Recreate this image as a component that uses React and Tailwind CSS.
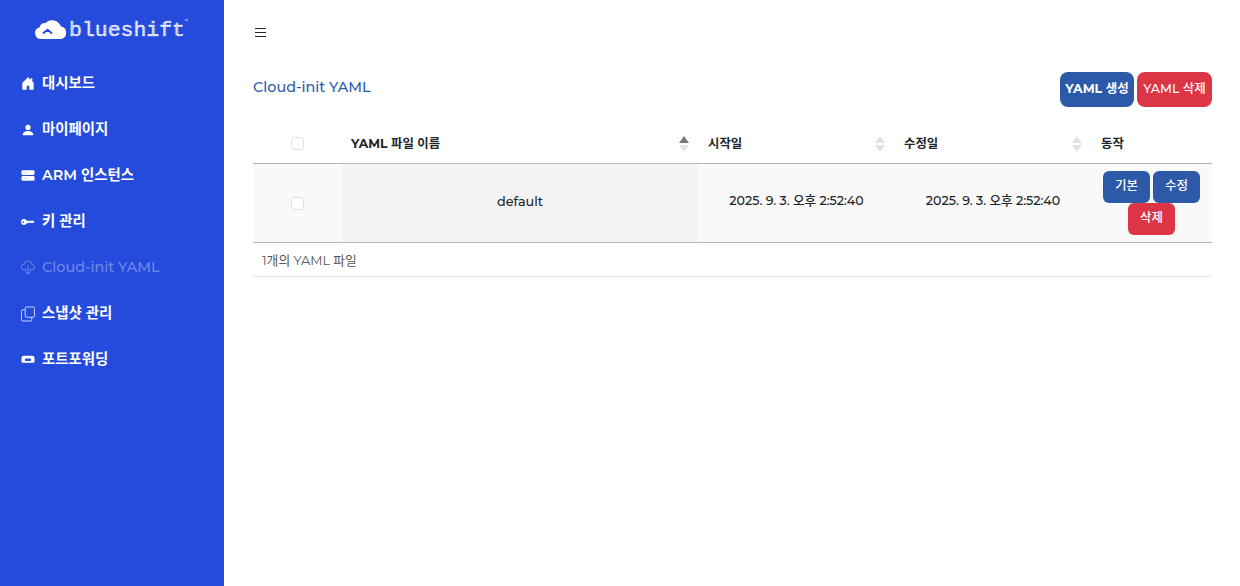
import {
  BsHouseDoorFill,
  BsPersonFill,
  BsKeyFill,
  BsCloudDownload,
} from "react-icons/bs";

const FONT = "font-['Montserrat','Inter','Noto_Sans_CJK_KR',sans-serif]";

function PortIcon() {
  return (
    <svg width="15" height="15" viewBox="0 0 15 15" fill="none">
      <path
        fillRule="evenodd"
        d="M3 3.5h9a2.5 2.5 0 0 1 2.5 2.5v4.2a.8.8 0 0 1-.8.8H1.3a.8.8 0 0 1-.8-.8V6A2.5 2.5 0 0 1 3 3.5zM5 6.5a.8.8 0 0 0-.8.8v.9a.8.8 0 0 0 .8.8h5a.8.8 0 0 0 .8-.8v-.9a.8.8 0 0 0-.8-.8z"
        fill="#fff"
      />
    </svg>
  );
}

function ServerIcon() {
  return (
    <svg width="15" height="15" viewBox="0 0 15 15">
      <rect x="0.5" y="2" width="14" height="5" rx="1.4" fill="#fff" />
      <rect x="0.5" y="8" width="14" height="5" rx="1.4" fill="#fff" />
      <path d="M3 4.5h1M5 4.5h1M3 10.5h1M5 10.5h1" stroke="#9db0ee" strokeWidth="1" />
    </svg>
  );
}

function CopyIcon() {
  return (
    <svg width="15" height="16" viewBox="0 0 15 16" fill="none" stroke="#d5ddfa" strokeWidth="1">
      <rect x="4.5" y="0.5" width="10" height="11" rx="1.5" />
      <path d="M4.5 3.5H2A1.5 1.5 0 0 0 .5 5v9A1.5 1.5 0 0 0 2 15.5h8a1.5 1.5 0 0 0 1.5-1.5v-2.5" />
    </svg>
  );
}

const menu = [
  { label: "대시보드", icon: <BsHouseDoorFill size={15} /> },
  { label: "마이페이지", icon: <BsPersonFill size={16} /> },
  { label: "ARM 인스턴스", icon: <ServerIcon /> },
  { label: "키 관리", icon: <BsKeyFill size={16} /> },
  { label: "Cloud-init YAML", icon: <BsCloudDownload size={15} />, active: true },
  { label: "스냅샷 관리", icon: <CopyIcon /> },
  { label: "포트포워딩", icon: <PortIcon /> },
];

function Logo() {
  return (
    <svg width="156" height="24" viewBox="0 0 156 24" className="overflow-visible">
      <defs>
        <pattern id="dots" width="1.5" height="1.5" patternUnits="userSpaceOnUse">
          <rect width="1.3" height="1.3" fill="#fff" />
        </pattern>
      </defs>
      <path
        d="M7 23a6 6 0 0 1-1.4-11.8A5.6 5.6 0 0 1 11.5 7 9.3 9.3 0 0 1 27 10.6 6.3 6.3 0 0 1 27 23z"
        fill="#fff"
      />
      <path d="M9.5 17l4-3.2 4 3.2" fill="none" stroke="#254bdd" strokeWidth="2" strokeLinecap="round" />
      <text
        x="35"
        y="20"
        fontFamily="'Liberation Mono', monospace"
        fontSize="21"
        textLength="116"
        lengthAdjust="spacingAndGlyphs"
        fill="url(#dots)"
        stroke="url(#dots)"
        strokeWidth="0.6"
      >
        blueshift
      </text>
      <text x="150" y="6" fontFamily="'Liberation Sans', sans-serif" fontSize="4" fill="#fff">
        ™
      </text>
    </svg>
  );
}

function Sorter({ up }) {
  return (
    <span className="flex flex-col gap-[2px]">
      <span className={`h-0 w-0 border-x-[5px] border-b-[7px] border-x-transparent ${up ? "border-b-[#7a7a7a]" : "border-b-[#e2e2e2]"}`} />
      <span className="h-0 w-0 border-x-[5px] border-t-[7px] border-x-transparent border-t-[#e2e2e2]" />
    </span>
  );
}

function Check() {
  return <span className="block h-[13px] w-[13px] rounded-[3px] border border-[#dee2e6] bg-white" />;
}

function SmallButton({ color, children }) {
  return (
    <button className={`h-[32px] w-[47px] rounded-[6px] text-[12.5px] text-white ${color}`}>{children}</button>
  );
}

export default function App() {
  return (
    <div className={`flex min-h-[586px] bg-white text-[#212529] ${FONT}`}>
      <aside className="w-[224px] shrink-0 bg-[#254bdd]">
        <div className="flex justify-center pt-[16px] pb-[21px]">
          <Logo />
        </div>
        <nav className="flex flex-col">
          {menu.map((item) => (
            <a
              key={item.label}
              className={`flex h-[46px] items-center gap-[7px] pl-[21px] text-[14.4px] ${
                item.active ? "font-medium text-[#ffffff59]" : "font-semibold text-white"
              }`}
            >
              <span className="-mt-[1px] flex w-[14px] justify-center">{item.icon}</span>
              {item.label}
            </a>
          ))}
        </nav>
      </aside>

      <main className="flex-1 pr-[28px] pl-[29px]">
        <div className="flex h-[64px] items-center pl-[2px]">
          <svg width="11" height="9" viewBox="0 0 11 9">
            <path d="M0 .5h11M0 4.5h11M0 8.5h11" stroke="#212529" strokeWidth="1" />
          </svg>
        </div>

        <div className="mt-[8px] flex items-start justify-between">
          <h1 className="mt-[5px] text-[14.4px] font-medium text-[#2c5aa9]">Cloud-init YAML</h1>
          <div className="flex gap-[3px]">
            <button className="h-[35px] w-[74px] rounded-[8px] bg-[#2c5aa9] text-[12.5px] font-bold text-white">YAML 생성</button>
            <button className="h-[35px] w-[75px] rounded-[8px] bg-[#dc3545] text-[12.5px] font-medium text-white">YAML 삭제</button>
          </div>
        </div>

        <table className="mt-[15px] w-[959px] table-fixed border-collapse text-[12.6px]">
          <colgroup>
            <col className="w-[89px]" />
            <col className="w-[356px]" />
            <col className="w-[197px]" />
            <col className="w-[196px]" />
            <col className="w-[121px]" />
          </colgroup>
          <thead>
            <tr className="h-[41px] border-b border-[#b5b5b5] text-left text-[12.4px] font-bold">
              <th className="pt-[2px] text-center">
                <span className="flex justify-center"><Check /></span>
              </th>
              <th className="px-[9px] pt-[3px]">
                <span className="flex items-center justify-between"><span className="pt-[2px]">YAML 파일 이름</span><Sorter up /></span>
              </th>
              <th className="px-[10px] pt-[3px]">
                <span className="flex items-center justify-between"><span className="pt-[2px]">시작일</span><Sorter /></span>
              </th>
              <th className="px-[9px] pt-[3px]">
                <span className="flex items-center justify-between"><span className="pt-[2px]">수정일</span><Sorter /></span>
              </th>
              <th className="px-[10px] pt-[5px]">동작</th>
            </tr>
          </thead>
          <tbody>
            <tr className="h-[79px] border-b border-[#b5b5b5] bg-[#f9f9f9] text-center font-medium">
              <td className="pt-[2px]">
                <span className="flex justify-center"><Check /></span>
              </td>
              <td className="bg-[#f3f3f3] pb-[2px] text-[12.8px]">default</td>
              <td className="pb-[2px]">2025. 9. 3. 오후 2:52:40</td>
              <td className="pb-[2px]">2025. 9. 3. 오후 2:52:40</td>
              <td>
                <div className="flex flex-wrap justify-center gap-x-[3px] px-[9px]">
                  <SmallButton color="bg-[#2c5aa9]">기본</SmallButton>
                  <SmallButton color="bg-[#2c5aa9]">수정</SmallButton>
                  <SmallButton color="bg-[#dc3545]">삭제</SmallButton>
                </div>
              </td>
            </tr>
            <tr className="h-[34px] border-b border-[#e6e6e6] text-[12.8px] text-[#555]">
              <td colSpan={5} className="pt-[4px] pl-[9px]">1개의 YAML 파일</td>
            </tr>
          </tbody>
        </table>
      </main>
    </div>
  );
}
